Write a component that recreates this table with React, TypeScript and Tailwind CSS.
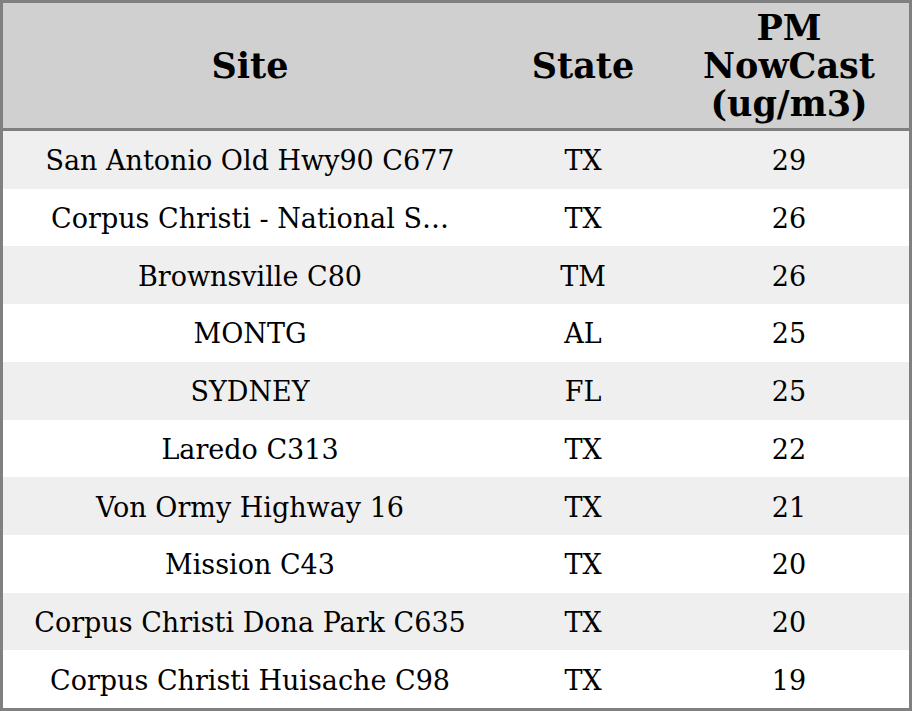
import React from 'react'

const rows = [
  { site: 'San Antonio Old Hwy90 C677', state: 'TX', pm: 29 },
  { site: 'Corpus Christi - National S\u2026', state: 'TX', pm: 26 },
  { site: 'Brownsville C80', state: 'TM', pm: 26 },
  { site: 'MONTG', state: 'AL', pm: 25 },
  { site: 'SYDNEY', state: 'FL', pm: 25 },
  { site: 'Laredo C313', state: 'TX', pm: 22 },
  { site: 'Von Ormy Highway 16', state: 'TX', pm: 21 },
  { site: 'Mission C43', state: 'TX', pm: 20 },
  { site: 'Corpus Christi Dona Park C635', state: 'TX', pm: 20 },
  { site: 'Corpus Christi Huisache C98', state: 'TX', pm: 19 },
]

const cols = 'grid grid-cols-[494px_172px_1fr]'

export default function App(): JSX.Element {
  return (
    <div className="flex h-[711px] w-[912px] flex-col border-[3px] border-[#808080] bg-white font-['DejaVu_Serif',serif] text-black">
      <div className={`${cols} h-[128px] shrink-0 items-center border-b-[3px] border-[#808080] bg-[#d0d0d0] text-center text-[35px] font-bold leading-[38px]`}>
        <div className="pt-[1px]">Site</div>
        <div className="pt-[1px]">State</div>
        <div className="pt-[1px]">PM<br />NowCast<br />(ug/m3)</div>
      </div>

      <div className="flex flex-1 flex-col">
        {rows.map((r, i) => (
          <div
            key={i}
            className={`${cols} flex-1 items-center pt-[3px] text-center text-[27px] leading-[34px] ${i % 2 === 0 ? 'bg-[#efefef]' : 'bg-white'}`}
          >
            <div className="truncate px-2">{r.site}</div>
            <div>{r.state}</div>
            <div>{r.pm}</div>
          </div>
        ))}
      </div>
    </div>
  )
}
